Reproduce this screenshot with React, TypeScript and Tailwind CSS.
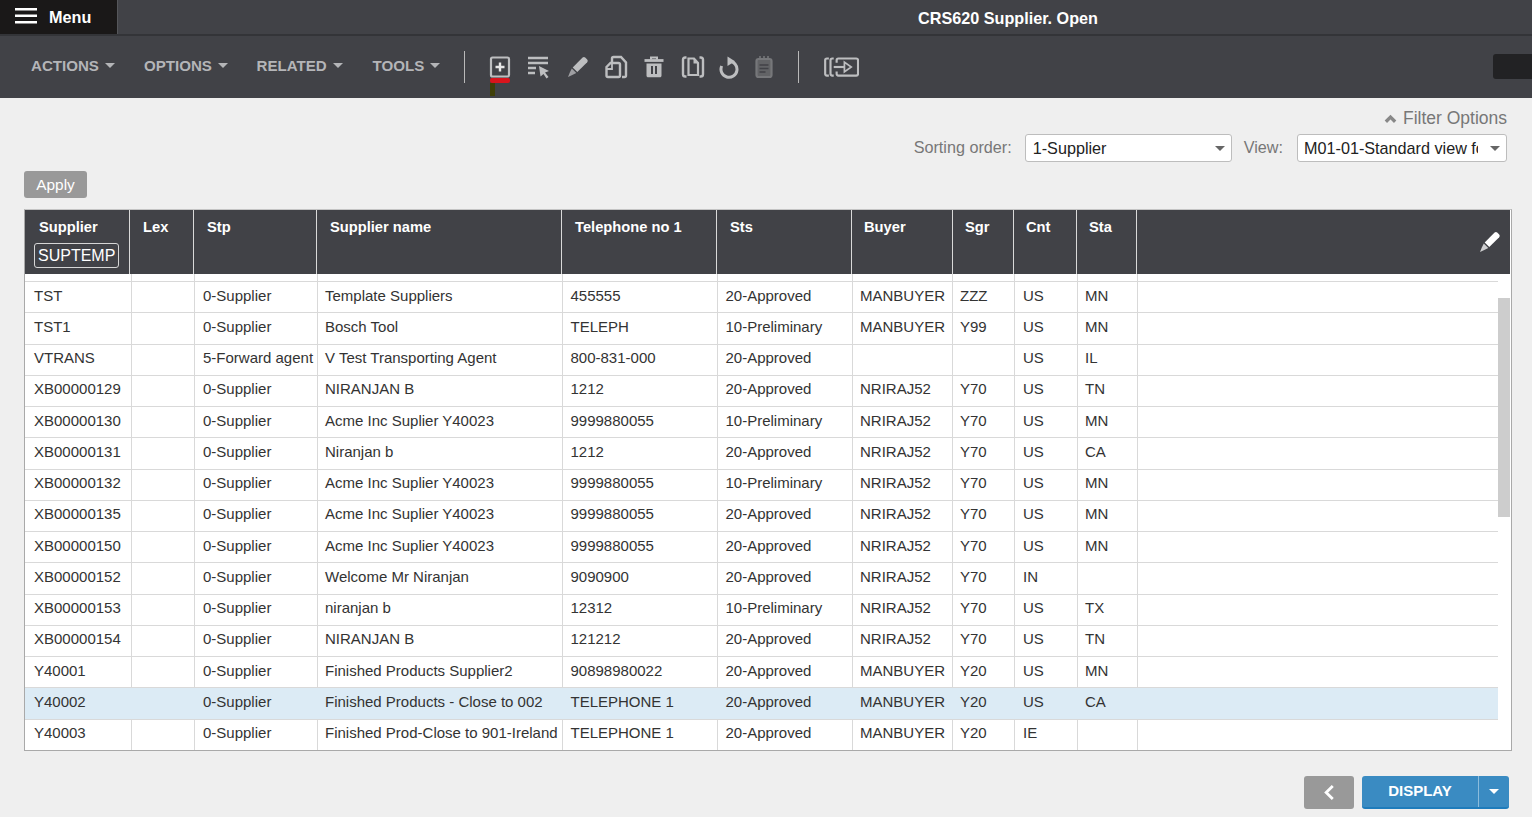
import React from 'react';

const font = "font-['Liberation_Sans',Arial,sans-serif]";

type Row = string[];

const rows: Row[] = [
    ['TST', '', '0-Supplier', 'Template Suppliers', '455555', '20-Approved', 'MANBUYER', 'ZZZ', 'US', 'MN'],
    ['TST1', '', '0-Supplier', 'Bosch Tool', 'TELEPH', '10-Preliminary', 'MANBUYER', 'Y99', 'US', 'MN'],
    ['VTRANS', '', '5-Forward agent', 'V Test Transporting Agent', '800-831-000', '20-Approved', '', '', 'US', 'IL'],
    ['XB00000129', '', '0-Supplier', 'NIRANJAN B', '1212', '20-Approved', 'NRIRAJ52', 'Y70', 'US', 'TN'],
    ['XB00000130', '', '0-Supplier', 'Acme Inc Suplier Y40023', '9999880055', '10-Preliminary', 'NRIRAJ52', 'Y70', 'US', 'MN'],
    ['XB00000131', '', '0-Supplier', 'Niranjan b', '1212', '20-Approved', 'NRIRAJ52', 'Y70', 'US', 'CA'],
    ['XB00000132', '', '0-Supplier', 'Acme Inc Suplier Y40023', '9999880055', '10-Preliminary', 'NRIRAJ52', 'Y70', 'US', 'MN'],
    ['XB00000135', '', '0-Supplier', 'Acme Inc Suplier Y40023', '9999880055', '20-Approved', 'NRIRAJ52', 'Y70', 'US', 'MN'],
    ['XB00000150', '', '0-Supplier', 'Acme Inc Suplier Y40023', '9999880055', '20-Approved', 'NRIRAJ52', 'Y70', 'US', 'MN'],
    ['XB00000152', '', '0-Supplier', 'Welcome Mr Niranjan', '9090900', '20-Approved', 'NRIRAJ52', 'Y70', 'IN', ''],
    ['XB00000153', '', '0-Supplier', 'niranjan b', '12312', '10-Preliminary', 'NRIRAJ52', 'Y70', 'US', 'TX'],
    ['XB00000154', '', '0-Supplier', 'NIRANJAN B', '121212', '20-Approved', 'NRIRAJ52', 'Y70', 'US', 'TN'],
    ['Y40001', '', '0-Supplier', 'Finished Products Supplier2', '90898980022', '20-Approved', 'MANBUYER', 'Y20', 'US', 'MN'],
    ['Y40002', '', '0-Supplier', 'Finished Products - Close to 002', 'TELEPHONE 1', '20-Approved', 'MANBUYER', 'Y20', 'US', 'CA'],
    ['Y40003', '', '0-Supplier', 'Finished Prod-Close to 901-Ireland', 'TELEPHONE 1', '20-Approved', 'MANBUYER', 'Y20', 'IE', ''],
];

const bodyCols = ['w-[107px]', 'w-[63px]', 'w-[123px]', 'w-[245px]', 'w-[155px]', 'w-[135px]', 'w-[100px]', 'w-[62px]', 'w-[63px]', 'w-[60px]'];
const bodyPad = ['pl-[9px]', 'pl-[9px]', 'pl-[8px]', 'pl-[7px]', 'pl-[7.500px]', 'pl-[7.500px]', 'pl-[7px]', 'pl-[7px]', 'pl-[8px]', 'pl-[7px]'];

const headCols = [
    ['Supplier', 'w-[105px] pl-[14px]'],
    ['Lex', 'w-[64px] pl-[13px]'],
    ['Stp', 'w-[123px] pl-[13px]'],
    ['Supplier name', 'w-[245px] pl-[13px]'],
    ['Telephone no 1', 'w-[155px] pl-[13px]'],
    ['Sts', 'w-[135px] pl-[13px]'],
    ['Buyer', 'w-[101px] pl-[12px]'],
    ['Sgr', 'w-[61px] pl-[12px]'],
    ['Cnt', 'w-[63px] pl-[12px]'],
    ['Sta', 'w-[60px] pl-[12px]'],
];

const Caret = ({ className }: { className: string }) => (
    <span className={`inline-block w-0 h-0 border-l-[5px] border-r-[5px] border-t-[5px] border-l-transparent border-r-transparent ${className}`} />
);

const Pencil = ({ className }: { className: string }) => (
    <svg viewBox="0 0 22 22" className={className} fill="currentColor">
        <path d="M15.6 1.6c.8-.7 1.8-.7 2.6 0l2 2c.7.8.7 1.8 0 2.6L10.300 16l-4.600-4.600z" />
        <path d="M4.800 12.500l4.500 4.500-4 1.900L1 21l1.700-4.300z" opacity=".75" />
    </svg>
);

const ToolIcon = ({ children, className = '' }: { children: React.ReactNode; className?: string }) => (
    <svg viewBox="0 0 24 24" className={`w-[24px] h-[24px] ${className}`} fill="none" stroke="currentColor" strokeWidth="2.200">
        {children}
    </svg>
);

const Toolbar = () => (
    <div className="h-[62px] bg-[#414247] flex items-center relative">
        <div className="flex items-center pl-[31px] pb-[2px] text-[#b4b5b8] font-bold text-[15.100px]">
            {['ACTIONS', 'OPTIONS', 'RELATED', 'TOOLS'].map((t, i) => (
                <div key={t} className={`flex items-center gap-[6px] ${i === 0 ? 'w-[113px]' : i === 1 ? 'w-[112.500px]' : i === 2 ? 'w-[116px]' : 'w-[91px]'}`}>
                    <span>{t}</span>
                    <Caret className="border-t-[#b4b5b8]" />
                </div>
            ))}
        </div>
        <div className="w-px h-[32px] bg-[#b9b9b9]" />
        <div className="flex items-center text-[#bdbec0] pl-[23px]">
            <div className="relative w-[24px] h-[24px]">
                <ToolIcon>
                    <rect x="3" y="2.500" width="18" height="19" rx="1.500" />
                    <path d="M12 7.500v9M7.500 12h9" strokeWidth="2.400" stroke="#e6e6e6" />
                </ToolIcon>
                <div className="absolute left-[2px] top-[23px] w-[20px] h-[5px] bg-[#d9141c] rounded-[2px]" />
                <div className="absolute left-[2px] top-[28px] w-[5px] h-[13px] bg-[#3f3f08]" />
            </div>
            <ToolIcon className="ml-[15px]">
                <path d="M1 3h20M1 8h20M1 13h8M1 18h7" strokeWidth="2.400" />
                <path d="M12 11l10 5-4 1.500 3.500 4.500-2 1.500-3-4.500-3 2.500z" fill="currentColor" stroke="none" />
            </ToolIcon>
            <Pencil className="w-[22px] h-[22px] ml-[16px] text-[#bdbec0]" />
            <ToolIcon className="ml-[15px]">
                <path d="M8 7V3.500C8 2.600 8.500 2 9.500 2H17l5 5.500v13c0 1-.5 1.500-1.500 1.500H18" strokeWidth="2.400" />
                <path d="M2.500 12l4-4h8c.8 0 1.500.5 1.500 1.500v11c0 .8-.7 1.500-1.500 1.500H4c-1 0-1.500-.7-1.500-1.500z" strokeWidth="2.400" />
                <path d="M3 14h5V9" strokeWidth="1.800" />
            </ToolIcon>
            <ToolIcon className="ml-[14px]">
                <path d="M2.500 5.500h19" strokeWidth="2.800" />
                <path d="M9 4.500V2.500h6v2" strokeWidth="2" />
                <path d="M4.500 8.500h15V20.500c0 1-.6 1.800-1.800 1.800H6.300c-1.200 0-1.800-.8-1.800-1.800z" fill="currentColor" stroke="none" />
                <path d="M10 11v8M14 11v8" strokeWidth="2" stroke="#414247" />
            </ToolIcon>
            <ToolIcon className="ml-[15px]">
                <path d="M5.500 2.500H4.300C2.800 2.500 2 3.400 2 4.800v14.400c0 1.400.8 2.300 2.300 2.300h1.200M18.500 2.500h1.200c1.500 0 2.300.9 2.300 2.300v14.400c0 1.400-.8 2.300-2.300 2.300h-1.200" strokeWidth="2.400" />
                <path d="M7.500 3.500h5.500l4 4.500v12H7.500z" strokeWidth="2.200" />
                <path d="M12.500 3.500v5h4.500z" fill="currentColor" stroke="none" />
            </ToolIcon>
            <ToolIcon className="ml-[12px]">
                <path d="M12 6.300A8 8 0 1 1 4.700 11" strokeWidth="3" />
                <path d="M10.500 1.500l7.500 4.800-7.500 4.700z" fill="currentColor" stroke="none" />
            </ToolIcon>
            <ToolIcon className="ml-[11px] text-[#76777a]">
                <rect x="4.500" y="4" width="15" height="18" rx="2" fill="#626366" />
                <path d="M8 1v3M12 1v3M16 1v3" strokeWidth="1.600" />
                <path d="M7.500 10h9M7.500 13.500h9M7.500 17h6" strokeWidth="1.600" stroke="#414247" />
            </ToolIcon>
        </div>
        <div className="w-px h-[32px] bg-[#b9b9b9] ml-[22px]" />
        <svg viewBox="0 0 36 20" className="w-[35px] h-[20px] ml-[25px] text-[#bdbec0]" fill="none" stroke="currentColor" strokeWidth="2.200">
            <path d="M5 1.200H3C1.800 1.200 1.200 1.800 1.200 3v14c0 1.200.6 1.800 1.800 1.800h2M10 1.200H8.500C7.300 1.200 6.700 1.800 6.700 3v14c0 1.200.6 1.800 1.800 1.800H10" />
            <path d="M13 5.500V3c0-1.200.6-1.800 1.800-1.800h18.400c1.200 0 1.800.6 1.800 1.800v14c0 1.200-.6 1.800-1.800 1.800H14.800c-1.200 0-1.800-.6-1.800-1.800v-2.500" />
            <path d="M10 10h11" />
            <path d="M21 5l7 5-7 5z" strokeWidth="1.800" />
        </svg>
        <div className="absolute right-0 top-[18px] w-[39px] h-[25px] bg-[#222224] rounded-l-[3px]" />
    </div>
);

const Select = ({ value, className }: { value: string; className: string }) => (
    <div className={`h-[28px] bg-white border border-[#bdbdbd] rounded-[3px] flex items-center text-[16.200px] text-[#222] ${className}`}>
        <span className="flex-1 overflow-hidden whitespace-nowrap">{value}</span>
        <Caret className="border-t-[#666] ml-[12px] mr-[6px]" />
    </div>
);

const Table = () => (
    <div className="ml-[24px] mr-[20px] h-[542px] border border-[#a9a9a9] border-t-[#c4c4c4] pr-px bg-white flex flex-col overflow-hidden">
        <div className="h-[64px] shrink-0 flex bg-[#414247] text-white relative">
            {headCols.map(([label, cls], i) => (
                <div key={label} className={`${cls} shrink-0 border-r border-[#d9d9d9] pt-[6px] font-bold text-[14.700px]`}>
                    {label}
                    {i === 0 && (
                        <div className="ml-[-5px] mt-[5px] w-[85px] h-[25px] border border-[#d6d6d6] rounded-[3px] pl-[3px] font-normal text-[16px] leading-[23px] whitespace-nowrap">
                            SUPTEMP
                        </div>
                    )}
                </div>
            ))}
            <div className="flex-1 flex justify-end items-center pr-[9px]">
                <Pencil className="w-[22px] h-[22px] text-white" />
            </div>
        </div>
        <div className="flex-1 flex min-h-0 overflow-hidden">
            <div className="flex-1 min-w-0 overflow-hidden">
                <div className="h-[8px] flex border-b border-[#d9d9d9]">
                    {bodyCols.map((w) => (
                        <div key={w + 'top'} className={`${w} shrink-0 border-r border-[#d9d9d9]`} />
                    ))}
                </div>
                {rows.map((row) => (
                    <div
                        key={row[0]}
                        className={`h-[31.250px] flex items-stretch border-b border-[#d9d9d9] text-[15px] text-[#333] ${row[0] === 'Y40002' ? 'bg-[#dcebf5]' : ''}`}
                    >
                        {row.map((cell, i) => (
                            <div
                                key={i}
                                className={`${bodyCols[i]} ${bodyPad[i]} shrink-0 flex items-center pb-[2.500px] whitespace-nowrap overflow-hidden ${row[0] === 'Y40002' ? '' : 'border-r border-[#d9d9d9]'}`}
                            >
                                {cell}
                            </div>
                        ))}
                    </div>
                ))}
            </div>
            <div className="w-[12px] shrink-0 pt-[24px]">
                <div className="h-[219px] bg-[#cdcdcd]" />
            </div>
        </div>
    </div>
);

export default function App() {
    return (
        <div className={`${font} h-[817px] w-full overflow-hidden bg-[#efefef] text-[#333]`}>
            <div className="h-[36px] bg-[#414247] border-b-2 border-[#333438] flex">
                <div className="w-[118px] bg-[#1a1818] border-r border-[#55565a] flex items-center text-white">
                    <svg viewBox="0 0 22 16" className="w-[22px] h-[16px] ml-[15px] mb-[2px]" fill="currentColor">
                        <rect y="0" width="22" height="2.500" />
                        <rect y="6.500" width="22" height="2.500" />
                        <rect y="13" width="22" height="2.500" />
                    </svg>
                    <span className="ml-[12px] font-bold text-[16.200px]">Menu</span>
                </div>
                <div className="flex-1 text-center text-white font-bold text-[16.200px] leading-[36px] pl-[366px]">
                    CRS620 Supplier. Open
                </div>
            </div>
            <Toolbar />
            <div className="flex justify-end items-center pr-[25px] pt-[9px] h-[31px] text-[#777] text-[17.500px]">
                <svg viewBox="0 0 14 10" className="w-[13px] h-[10px] mr-[6px] mt-[2px] text-[#888]" fill="none" stroke="currentColor" strokeWidth="3.600">
                    <path d="M2 8l5-5 5 5" />
                </svg>
                Filter Options
            </div>
            <div className="flex justify-end items-center pr-[25px] mt-[5px] text-[16.200px] text-[#777]">
                <span className="mr-[13px] mb-[2px]">Sorting order:</span>
                <Select value="1-Supplier" className="w-[207px] pl-[7px]" />
                <span className="ml-[12px] mr-[14px] mb-[2px]">View:</span>
                <Select value="M01-01-Standard view for" className="w-[210px] pl-[6px]" />
            </div>
            <div className="ml-[24px] mt-[9px] w-[63px] h-[27px] pt-[1px] bg-[#999] rounded-[3px] text-white text-[15.400px] flex items-center justify-center">
                Apply
            </div>
            <div className="mt-[11px]">
                <Table />
            </div>
            <div className="flex justify-end pr-[23px] mt-[25px]">
                <div className="w-[50px] h-[33px] bg-[#999] rounded-[3px] flex items-center justify-center text-white">
                    <svg viewBox="0 0 12 18" className="w-[12px] h-[17px]" fill="none" stroke="currentColor" strokeWidth="3">
                        <path d="M10 2L3 9l7 7" />
                    </svg>
                </div>
                <div className="ml-[8px] w-[147px] h-[33px] bg-[#3a8bc2] border-b-2 border-[#1e7cbc] rounded-[3px] flex text-white font-bold text-[15px]">
                    <div className="w-[117px] flex items-center justify-center border-r border-[#8bbcdc]">DISPLAY</div>
                    <div className="flex-1 flex items-center justify-center">
                        <Caret className="border-t-white" />
                    </div>
                </div>
            </div>
        </div>
    );
}
